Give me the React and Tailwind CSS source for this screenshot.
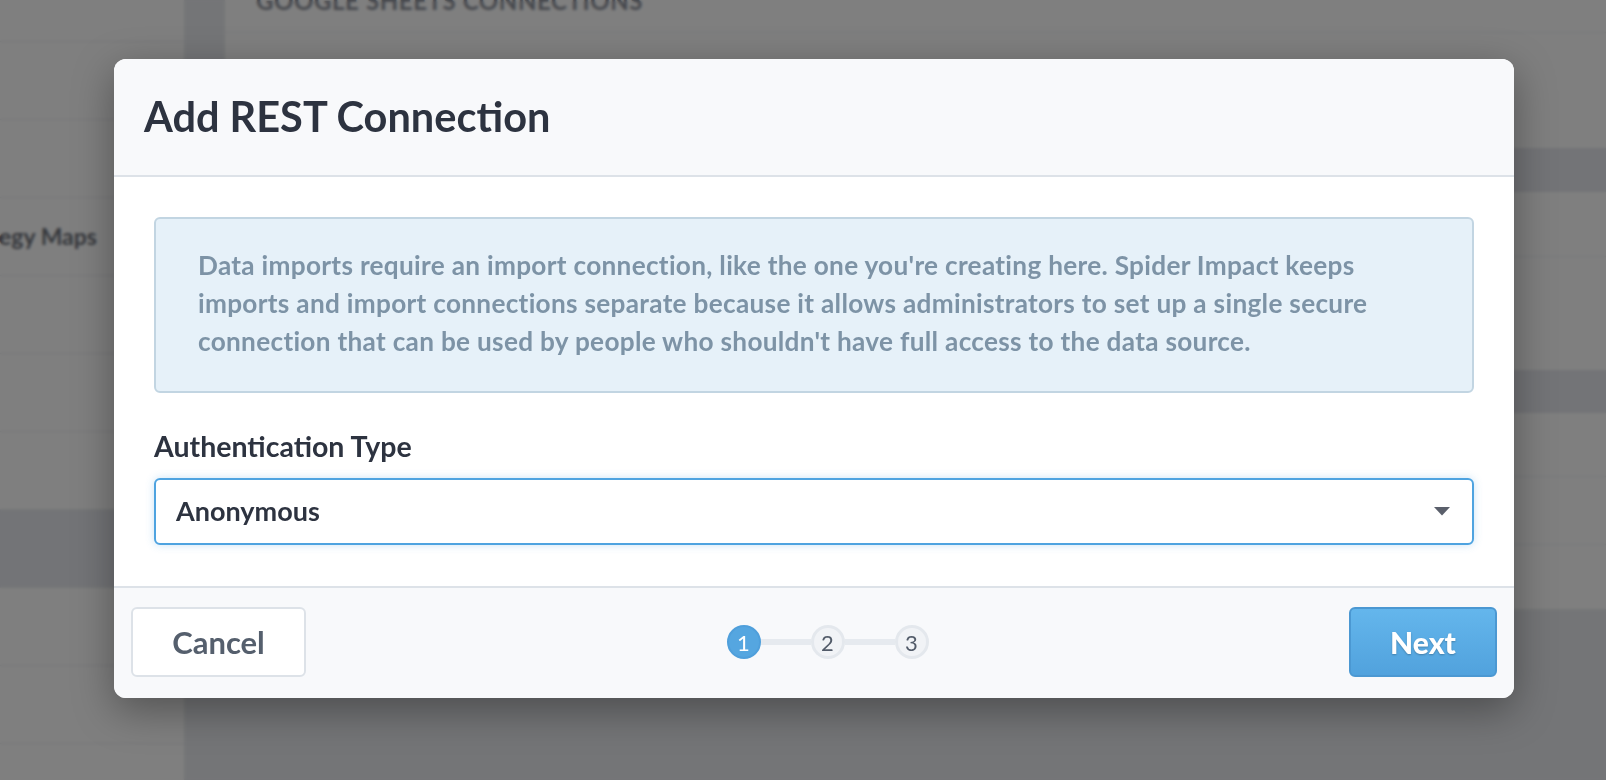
const SIDE_ROWS = ['', '', '', 'Strategy Maps', '', '', '', '', '', '', ''];

function Sidebar() {
  return (
    <aside className="w-[184px] shrink-0 bg-white">
      <div className="-mt-[36px]">
        {SIDE_ROWS.map((label, idx) => (
          <div
            key={idx}
            className={
              idx === 7
                ? 'h-[78px] bg-[#e6e8ee] border-b border-[#eceef1]'
                : 'h-[78px] flex items-center border-b border-[#eceef1]'
            }
          >
            {label && (
              <span className="-ml-[50px] text-[23px] font-bold text-[#6b6f78] whitespace-nowrap">{label}</span>
            )}
          </div>
        ))}
      </div>
    </aside>
  );
}

function ContentCard() {
  return (
    <div className="flex-1 ml-[41px] h-[609px] bg-white flex flex-col">
      <div className="h-[33px] border-b border-[#eef0f3] pl-[31px] flex items-end">
        <span className="pb-[19px] text-[24px] font-bold uppercase tracking-wide text-[#8c909a] leading-none">
          Google Sheets Connections
        </span>
      </div>
      <div className="h-[115px]" />
      <div className="h-[44px] bg-[#e6e8ee]" />
      <div className="h-[65px] border-b border-[#eef0f3]" />
      <div className="h-[113px]" />
      <div className="h-[43px] bg-[#e6e8ee]" />
      <div className="h-[64px] border-b border-[#eef0f3]" />
      <div className="h-[68px] border-b border-[#eef0f3]" />
    </div>
  );
}

function Stepper() {
  return (
    <div className="flex items-center">
      <div className="w-[34px] h-[34px] rounded-full bg-[#55a6e0] border-2 border-[#4f9fdb] flex items-center justify-center text-[22px] text-white">
        1
      </div>
      <div className="w-[50px] h-[6px] bg-[#e6eaef]" />
      <div className="w-[34px] h-[34px] rounded-full bg-[#f1f3f6] border-[3px] border-[#e4e8ed] flex items-center justify-center text-[22px] text-[#525b69]">
        2
      </div>
      <div className="w-[50px] h-[6px] bg-[#e6eaef]" />
      <div className="w-[34px] h-[34px] rounded-full bg-[#f1f3f6] border-[3px] border-[#e4e8ed] flex items-center justify-center text-[22px] text-[#525b69]">
        3
      </div>
    </div>
  );
}

function Modal() {
  return (
    <div className="absolute left-[114px] top-[59px] w-[1400px] rounded-[12px] overflow-hidden bg-white shadow-[0_12px_40px_rgba(0,0,0,0.35)]">
      <div className="h-[118px] bg-[#f8f9fb] border-b-2 border-[#dde2e8] flex items-center pl-[30px]">
        <h2 className="text-[41.5px] font-bold text-[#2d3340] leading-none">Add REST Connection</h2>
      </div>

      <div className="px-[40px] pt-[40px] pb-[41px]">
        <div className="h-[176px] rounded-[6px] border-2 border-[#c2d5e2] bg-[#e6f1f9] pl-[42px] pr-[80px] pt-[27px]">
          <p className="text-[26.2px] tracking-[0.3px] font-bold leading-[38px] text-[#7d93a6]">
            Data imports require an import connection, like the one you're creating here. Spider Impact keeps
            imports and import connections separate because it allows administrators to set up a single secure
            connection that can be used by people who shouldn't have full access to the data source.
          </p>
        </div>

        <label className="block mt-[36px] mb-[15px] text-[28.5px] leading-[34px] font-bold text-[#2d3340]">
          Authentication Type
        </label>

        <div className="h-[67px] rounded-[6px] border-2 border-[#4ea3e0] bg-white shadow-[0_0_8px_rgba(78,163,224,0.3)] flex items-center justify-between pl-[20px] pr-[20px]">
          <span className="text-[27px] font-bold text-[#2d3340]">Anonymous</span>
          <svg width="16" height="9" viewBox="0 0 16 9" className="mr-[2px]">
            <path d="M0 0 L16 0 L8 8.5 Z" fill="#5a5f6b" />
          </svg>
        </div>
      </div>

      <div className="h-[112px] bg-[#f8f9fb] border-t-2 border-[#dde2e8] flex items-center justify-between px-[17px] pb-[2px]">
        <button className="w-[175px] h-[70px] rounded-[6px] border-2 border-[#dde2e8] bg-white text-[31px] font-bold text-[#555f6d]">
          Cancel
        </button>
        <Stepper />
        <button className="w-[148px] h-[70px] rounded-[6px] border-2 border-[#4b98d2] bg-gradient-to-b from-[#64b6ec] to-[#51a2dd] text-[30px] font-black text-white [text-shadow:0_1px_2px_rgba(0,0,0,0.25)]">
          Next
        </button>
      </div>
    </div>
  );
}

export default function App() {
  return (
    <div className="relative w-[1606px] h-[780px] overflow-hidden bg-[#e9ebef] font-['Source_Sans_Pro','Lato',sans-serif]">
      <div className="flex h-full">
        <Sidebar />
        <ContentCard />
      </div>
      <div className="absolute inset-0 bg-black/50 backdrop-blur-[1.5px]" />
      <Modal />
    </div>
  );
}
